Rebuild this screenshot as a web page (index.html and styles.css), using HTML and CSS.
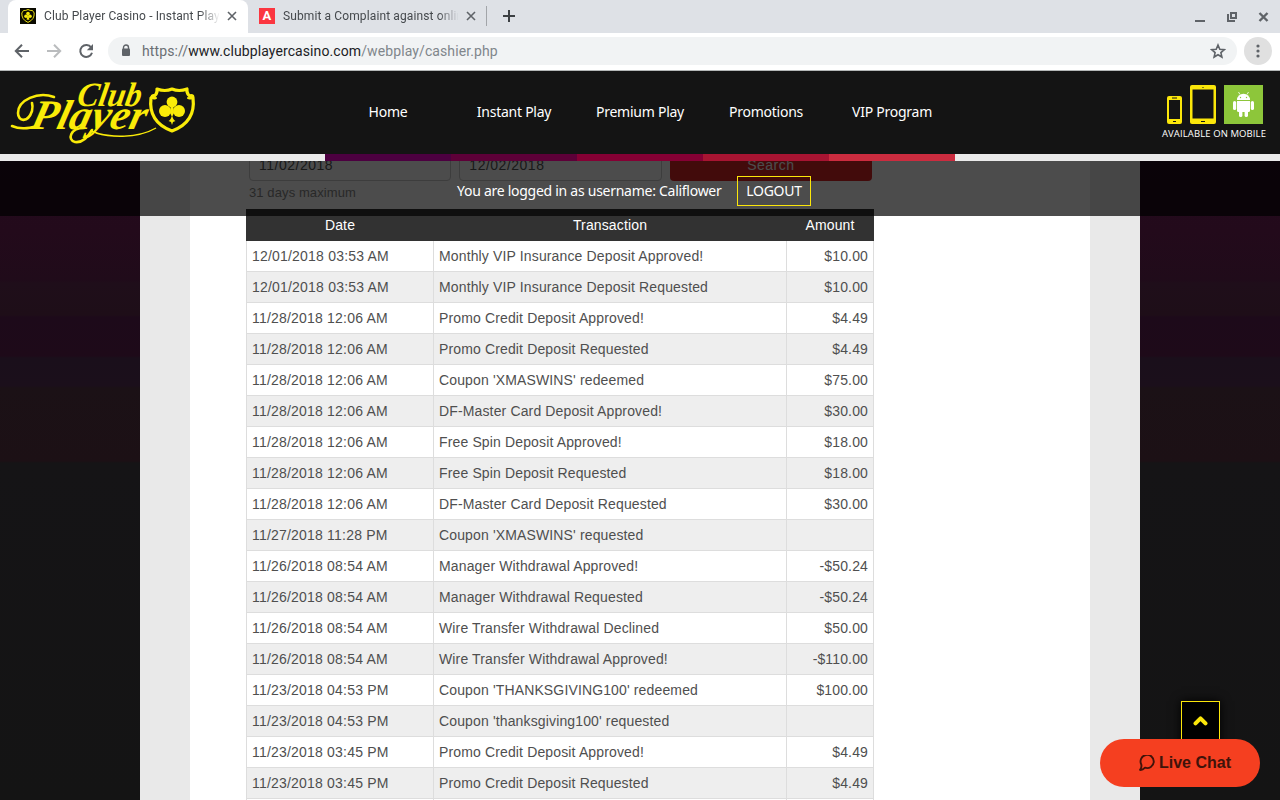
FILE: index.html
```html
<!DOCTYPE html>
<html lang="en">
  <head>
    <meta charset="UTF-8">
    <title>Club Player Casino - Instant Play</title>
    <link rel="stylesheet" href="styles.css">
  </head>
  <body>
    <div class="tabs">
      <div class="tab active">
        <svg class="favicon" width="16" height="16" viewBox="0 0 16 16">
          <rect width="16" height="16" fill="#0a0a00"/>
          <path d="M3.5 2.5Q6 2.8 8 1.5Q10 2.8 12.5 2.5L14.2 5Q14.6 11.5 8 14.4Q1.4 11.5 1.8 5Z" fill="none" stroke="#e8dc10" stroke-width="1"/>
          <g fill="#f5e90a"><circle cx="8" cy="5.6" r="1.8"/><circle cx="6" cy="8.3" r="1.8"/><circle cx="10" cy="8.3" r="1.8"/><path d="M7.6 7h.8l1 4.7H6.6z"/></g>
        </svg>
        <span class="tab-title">Club Player Casino - Instant Play</span>
        <svg class="close" width="10" height="10" viewBox="0 0 10 10"><path d="M1 1l8 8M9 1L1 9" stroke="#5f6368" stroke-width="1.6"/></svg>
      </div>
      <div class="tab">
        <span class="favicon red">A</span>
        <span class="tab-title">Submit a Complaint against online</span>
        <svg class="close" width="10" height="10" viewBox="0 0 10 10"><path d="M1 1l8 8M9 1L1 9" stroke="#5f6368" stroke-width="1.6"/></svg>
      </div>
      <svg class="plus" width="12" height="12" viewBox="0 0 12 12"><path d="M6 0v12M0 6h12" stroke="#3c4043" stroke-width="2"/></svg>
      <svg class="window" width="76" height="14" viewBox="0 0 76 14" fill="none" stroke="#5f6368" stroke-width="2">
        <path d="M1 12h10"/>
        <path d="M37 4h5v5h-5zM35 6h-1v6h6v-1"/>
        <path d="M65.5 4l8 8M73.5 4l-8 8" stroke-width="2.4"/>
      </svg>
    </div>

    <div class="toolbar">
      <svg width="16" height="16" viewBox="0 0 16 16" fill="none" stroke="#5f6368" stroke-width="2"><path d="M15 8H2.5M8 1.8L1.8 8L8 14.2"/></svg>
      <svg width="16" height="16" viewBox="0 0 16 16" fill="none" stroke="#babcbe" stroke-width="2"><path d="M1 8h12.5M8 1.8L14.2 8L8 14.2"/></svg>
      <svg width="16" height="16" viewBox="0 0 16 16"><path d="M13.2 4.5A6 6 0 1 0 14 9.8" fill="none" stroke="#5f6368" stroke-width="2"/><path d="M15 1v6.2H8.8z" fill="#5f6368"/></svg>
      <div class="address">
        <svg width="10" height="13" viewBox="0 0 10 13"><path d="M2.5 5V3.5a2.5 2.5 0 0 1 5 0V5" fill="none" stroke="#5f6368" stroke-width="1.4"/><rect x="1" y="4.6" width="8" height="7.4" rx="1" fill="#5f6368"/></svg>
        <span class="url">https://<b>www.clubplayercasino.com</b><i>/webplay/cashier.php</i></span>
        <svg width="16" height="16" viewBox="0 0 16 16"><path d="M8 2l1.8 4.2 4.5.4-3.4 3 1 4.4L8 11.7 4.1 14l1-4.4-3.4-3 4.5-.4z" fill="none" stroke="#5f6368" stroke-width="1.6"/></svg>
      </div>
      <div class="menu"><svg width="4" height="14" viewBox="0 0 4 14" fill="#5f6368"><circle cx="2" cy="2" r="1.6"/><circle cx="2" cy="7" r="1.6"/><circle cx="2" cy="12" r="1.6"/></svg></div>
    </div>

    <div class="site">
      <header>
        <svg class="logo" width="200" height="83" viewBox="0 0 200 83">
          <g fill="#faeb08" font-family="'Liberation Serif', serif" font-style="italic" font-weight="bold">
            <text transform="translate(76 35) skewX(-10)" font-size="34" textLength="64" lengthAdjust="spacingAndGlyphs">Club</text>
            <text transform="translate(29 58) skewX(-14)" font-size="42" textLength="115" lengthAdjust="spacingAndGlyphs">Player</text>
          </g>
          <g fill="none" stroke="#faeb08" stroke-linecap="round">
            <path d="M54 26C38 20 18 29 18 42C18 51 28 52 32 40Q33 35 32 32" stroke-width="2.6"/>
            <path d="M12 55C21 59 29 57 38 55" stroke-width="2.6"/>
            <path d="M84 57C70 57 67 69 75 71C82 72 88 66 92 59" stroke-width="2.6"/>
            <path d="M91 60C108 67 137 68 156 57C137 68 110 66 96 62" stroke-width="1.4"/>
            <path d="M157 18Q165 21 172 18Q179 21 187 18Q186 24 193 27Q196 51 172 60Q148 51 151 27Q158 24 157 18Z" stroke-width="3.2" stroke-linejoin="round"/>
            <path d="M156 27C151 29 150 24 154 24M188 27C194 29 195 24 191 24" stroke-width="2"/>
          </g>
          <g fill="#faeb08">
            <circle cx="172" cy="31" r="5.4"/><circle cx="165" cy="40" r="6"/><circle cx="179" cy="40" r="6"/>
            <path d="M171 32h2l1 10-2 4-2-4zM172 44q1 5 3.5 6l-2.5 1-1 3-1-3-2.5-1q2.5-1 3.5-6z"/>
          </g>
        </svg>
        <nav>
          <a>Home</a>
          <a>Instant Play</a>
          <a>Premium Play</a>
          <a>Promotions</a>
          <a>VIP Program</a>
        </nav>
        <div class="mobile">
          <div class="devices">
            <svg width="15" height="28" viewBox="0 0 15 28"><rect width="15" height="28" rx="2" fill="#fbe60a"/><path d="M2 4h11v19H2z" fill="#141414"/><path d="M5 2h5M6 25.5h3" stroke="#141414"/></svg>
            <svg width="26" height="39" viewBox="0 0 26 39"><rect width="26" height="39" rx="2" fill="#fbe60a"/><path d="M2.5 4.5h21v29h-21z" fill="#141414"/><path d="M11 36.5h4M12.5 2.5h1" stroke="#141414"/></svg>
            <svg width="39" height="39" viewBox="0 0 39 39">
              <rect width="39" height="39" fill="#8dc63a"/>
              <g fill="#fff"><path d="M13 15a6.5 6.2 0 0 1 13 0z"/><path d="M13 16h13v9.5q0 1.5-1.5 1.5h-10Q13 27 13 25.5z"/><rect x="9" y="16" width="3.2" height="9" rx="1.6"/><rect x="26.8" y="16" width="3.2" height="9" rx="1.6"/><rect x="15" y="24" width="3.4" height="8" rx="1.6"/><rect x="20.6" y="24" width="3.4" height="8" rx="1.6"/></g>
              <path d="M16 9.5l-1.5-2.5M23 9.5l1.5-2.5" stroke="#fff" stroke-width=".8"/>
              <circle cx="16.5" cy="12.5" r=".7" fill="#8dc63a"/><circle cx="22.5" cy="12.5" r=".7" fill="#8dc63a"/>
            </svg>
          </div>
          <span>AVAILABLE ON MOBILE</span>
        </div>
      </header>
      <div class="stripes"><i></i><i></i><i></i><i></i><i></i></div>

      <div class="page">
        <div class="content">
          <div class="panel">
            <form class="search">
              <div class="field">11/02/2018</div>
              <div class="field">12/02/2018</div>
              <div class="btn">Search</div>
            </form>
            <div class="hint">31 days maximum</div>
            <table>
              <tr><th class="date">Date</th><th>Transaction</th><th class="amount">Amount</th></tr>
              <tr><td>12/01/2018 03:53 AM</td><td>Monthly VIP Insurance Deposit Approved!</td><td>$10.00</td></tr>
              <tr><td>12/01/2018 03:53 AM</td><td>Monthly VIP Insurance Deposit Requested</td><td>$10.00</td></tr>
              <tr><td>11/28/2018 12:06 AM</td><td>Promo Credit Deposit Approved!</td><td>$4.49</td></tr>
              <tr><td>11/28/2018 12:06 AM</td><td>Promo Credit Deposit Requested</td><td>$4.49</td></tr>
              <tr><td>11/28/2018 12:06 AM</td><td>Coupon 'XMASWINS' redeemed</td><td>$75.00</td></tr>
              <tr><td>11/28/2018 12:06 AM</td><td>DF-Master Card Deposit Approved!</td><td>$30.00</td></tr>
              <tr><td>11/28/2018 12:06 AM</td><td>Free Spin Deposit Approved!</td><td>$18.00</td></tr>
              <tr><td>11/28/2018 12:06 AM</td><td>Free Spin Deposit Requested</td><td>$18.00</td></tr>
              <tr><td>11/28/2018 12:06 AM</td><td>DF-Master Card Deposit Requested</td><td>$30.00</td></tr>
              <tr><td>11/27/2018 11:28 PM</td><td>Coupon 'XMASWINS' requested</td><td></td></tr>
              <tr><td>11/26/2018 08:54 AM</td><td>Manager Withdrawal Approved!</td><td>-$50.24</td></tr>
              <tr><td>11/26/2018 08:54 AM</td><td>Manager Withdrawal Requested</td><td>-$50.24</td></tr>
              <tr><td>11/26/2018 08:54 AM</td><td>Wire Transfer Withdrawal Declined</td><td>$50.00</td></tr>
              <tr><td>11/26/2018 08:54 AM</td><td>Wire Transfer Withdrawal Approved!</td><td>-$110.00</td></tr>
              <tr><td>11/23/2018 04:53 PM</td><td>Coupon 'THANKSGIVING100' redeemed</td><td>$100.00</td></tr>
              <tr><td>11/23/2018 04:53 PM</td><td>Coupon 'thanksgiving100' requested</td><td></td></tr>
              <tr><td>11/23/2018 03:45 PM</td><td>Promo Credit Deposit Approved!</td><td>$4.49</td></tr>
              <tr><td>11/23/2018 03:45 PM</td><td>Promo Credit Deposit Requested</td><td>$4.49</td></tr>
              <tr><td></td><td></td><td></td></tr>
            </table>
          </div>
        </div>
        <div class="login">
          <span>You are logged in as username: Califlower</span>
          <a class="logout">LOGOUT</a>
        </div>
      </div>

      <div class="top"><svg width="15" height="11" viewBox="0 0 15 11"><path d="M2.5 8.3L7.5 3.3l5 5" fill="none" stroke="#fbe60a" stroke-width="4" stroke-linecap="round" stroke-linejoin="round"/></svg></div>
      <div class="chat">
        <svg width="16" height="17" viewBox="0 0 16 17"><path d="M2.3 9.5A6.6 6.6 0 1 1 6 12.7Q3.5 15.2 1 14.900Q3 12.500 2.300 9.500Z" fill="none" stroke="#40130a" stroke-width="1.9" stroke-linejoin="round"/></svg>
        <span>Live Chat</span>
      </div>
    </div>
  </body>
</html>
```
FILE: styles.css
```css
* {
  box-sizing: border-box;
}
body {
  margin: 0;
  height: 800px;
  overflow: hidden;
  font-family: "Liberation Sans", Arial, sans-serif;
}
svg {
  display: block;
  flex: none;
}

/* browser */
.tabs {
  display: flex;
  height: 33px;
  padding-left: 8px;
  background: #dee1e6;
  font: 12px Roboto, sans-serif;
  color: #45494d;
}
.tab {
  display: flex;
  align-items: center;
  width: 239px;
  padding: 0 10px 1px 11px;
}
.tab.active {
  width: 240px;
  padding-left: 12px;
  padding-right: 11px;
  background: #fff;
  border-radius: 8px 8px 0 0;
}
.tab:nth-child(2) {
  height: 20px;
  margin-top: 6px;
  border-right: 1px solid #a2a5a9;
}
.favicon {
  width: 16px;
  height: 16px;
  margin-right: 8px;
}
.red {
  background: #fb3640;
  color: #fff;
  font: bold 13px/16px "Roboto", sans-serif;
  text-align: center;
}
.tab-title {
  width: 176px;
  margin-right: 8px;
  overflow: hidden;
  white-space: nowrap;
  -webkit-mask-image: linear-gradient(90deg, #000 155px, transparent 176px);
  letter-spacing: 0.12px;
}
.close {
  margin-left: auto;
}
.plus {
  margin: 10px 0 0 16px;
}
.window {
  margin: 9px 10px 0 auto;
}
.toolbar {
  display: flex;
  align-items: center;
  gap: 16px;
  height: 38px;
  padding: 0 8px 2px 14px;
  background: #fff;
  border-bottom: 1px solid #b4b7b7;
}
.address {
  display: flex;
  align-items: center;
  flex: 1;
  height: 28px;
  margin-left: -2px;
  margin-right: -9px;
  padding: 0 11px 0 13px;
  border-radius: 14px;
  background: #f1f3f4;
}
.url {
  flex: 1;
  margin-left: 11px;
  font: 14px Roboto, sans-serif;
  letter-spacing: 0.1px;
  color: #6b6f73;
}
.url b {
  font-weight: normal;
  color: #202124;
}
.url i {
  font-style: normal;
  color: #80868b;
}
.menu {
  display: flex;
  align-items: center;
  justify-content: center;
  width: 28px;
  height: 28px;
  border-radius: 50%;
  background: #e0e0e0;
}

/* site */
.site {
  position: relative;
  height: 729px;
  overflow: hidden;
}
header {
  display: flex;
  height: 83px;
  background: #141414;
  color: #fff;
}
nav {
  display: flex;
  margin-left: 125px;
  font: 14px/82px "Noto Sans", sans-serif;
}
nav a {
  width: 126px;
  text-align: center;
  letter-spacing: -0.25px;
}
.mobile {
  margin: 14px 14px 0 auto;
  font: 9.5px/12px "Open Sans", sans-serif;
  letter-spacing: 0.1px;
}
.devices {
  display: flex;
  align-items: flex-end;
  gap: 8px;
  width: 96px;
  margin: 0 0 4px 5px;
}
.mobile span {
  display: block;
  width: 104px;
  white-space: nowrap;
}
.stripes {
  display: flex;
  justify-content: center;
  height: 7px;
  background: #eaeaea;
}
.stripes i {
  width: 126px;
  background: #4c0040;
}
.stripes i:nth-child(2) { background: #5d0038; }
.stripes i:nth-child(3) { background: #850034; }
.stripes i:nth-child(4) { background: #a71432; }
.stripes i:nth-child(5) { background: #cb2c3f; }

.page {
  position: relative;
  height: 639px;
  overflow: hidden;
  background: linear-gradient(#240b1e 0, #230a1b 70px, #200b1a 119px, #1f0e1a 122px, #1e0e18 154px, #1d0a1a 156px, #1e0a19 195px, #1a0f1b 197px, #1b0f1b 225px, #1b1116 227px, #1c1015 300px, #151416 302px, #141414 100%);
}
.content {
  width: 1000px;
  height: 639px;
  margin: 0 auto;
  padding: 0 50px;
  background: #e9e9e9;
}
.panel {
  height: 639px;
  padding: 0 216px 0 56px;
  background: #fff;
  overflow: hidden;
}
.search {
  display: flex;
  gap: 8px;
  margin: -14px 0 0 3px;
  width: 623px;
}
.field, .btn {
  width: 202.5px;
  height: 34px;
  line-height: 34px;
  font-size: 14px;
  letter-spacing: 0.5px;
  border: 1px solid #ccc;
  border-radius: 4px;
}
.field {
  padding-left: 9px;
  color: #555;
}
.btn {
  border: 0;
  line-height: 36px;
  text-align: center;
  background: #de2626;
  color: #fff;
}
.hint {
  height: 28px;
  padding-left: 3px;
  font-size: 13px;
  line-height: 24px;
  letter-spacing: 0.1px;
  color: #888;
}
table {
  width: 628px;
  table-layout: fixed;
  border-collapse: collapse;
  font-size: 14px;
  letter-spacing: 0.14px;
  color: #4f4f4f;
}
th {
  height: 31px;
  padding: 0 0 1px;
  background: #323232;
  color: #fff;
  font-weight: normal;
  border: 1px solid #323232;
}
th.date { width: 187px; }
th.amount { width: 87px; }
td {
  height: 31px;
  padding: 0 5px;
  border: 1px solid #ddd;
}
td:first-child {
  letter-spacing: 0.2px;
}
td:last-child {
  text-align: right;
}
tr:nth-child(odd) td {
  background: #eee;
}
.login {
  position: absolute;
  top: 0;
  left: 0;
  right: 0;
  display: flex;
  height: 55px;
  padding: 15px 0 0 457px;
  background: rgba(0,0,0,0.7);
  color: #fff;
  font: 14px/29px "Noto Sans", sans-serif;
  letter-spacing: -0.27px;
}
.login span {
  width: 280px;
}
.logout {
  width: 74px;
  height: 30px;
  border: 1px solid #fbe60a;
  line-height: 27px;
  text-align: center;
}
.top {
  position: absolute;
  left: 1181px;
  top: 630px;
  width: 39px;
  height: 50px;
  padding: 13px 0 0 11px;
  background: #000;
  border: 1px solid #fbe60a;
  box-shadow: 0 0 10px #000;
}
.chat {
  position: absolute;
  left: 1100px;
  top: 668px;
  display: flex;
  align-items: center;
  gap: 4px;
  width: 160px;
  height: 48px;
  padding-left: 39px;
  border-radius: 24px;
  background: #f53f20;
  color: #40130a;
  font-weight: bold;
  font-size: 16px;
}
```
